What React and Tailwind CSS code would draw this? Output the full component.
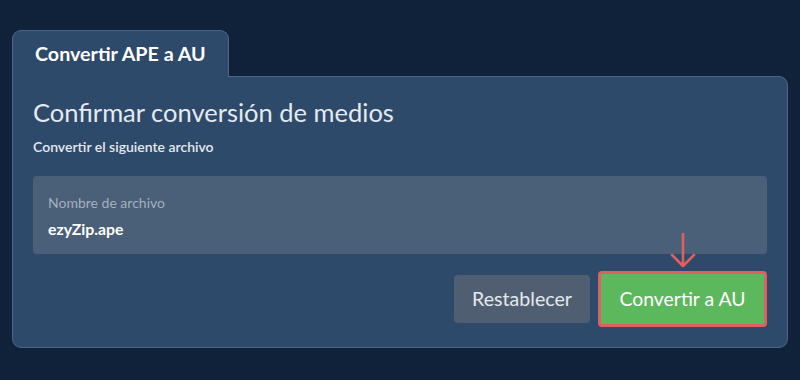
import React from "react";

function DownArrow() {
  return (
    <svg className="absolute left-1/2 -translate-x-1/2 -top-[38px]" width="30" height="36" viewBox="0 0 30 36" fill="none">
      <path d="M15 1 V33 M4 22 L15 33 L26 22" stroke="#e06060" strokeWidth="2.6" strokeLinecap="round" strokeLinejoin="round" />
    </svg>
  );
}

export default function App() {
  return (
    <div className="w-[800px] h-[380px] bg-[#10223a] pt-[30px] px-[12px]" style={{ fontFamily: "Lato, 'Noto Sans', sans-serif" }}>
      {/* Tab header */}
      <div className="flex">
        <div className="w-[217px] h-[47px] -mb-px relative z-10 bg-[#2d4a6b] border border-b-0 border-[#4b6688] rounded-t-[9px] pl-[22px] flex items-center">
          <span className="text-white font-bold text-[19.7px]">Convertir APE a AU</span>
        </div>
      </div>

      {/* Panel */}
      <div className="h-[272px] bg-[#2d4a6b] border border-[#4b6688] rounded-b-[9px] rounded-tr-[9px] px-[20px] pt-[20px]">
        <h1 className="text-[#e6e9ee] text-[25.5px] leading-[30px]">Confirmar conversión de medios</h1>
        <p className="mt-[11px] text-[#e6e9ee] text-[14px] font-semibold leading-[18px]">Convertir el siguiente archivo</p>

        <div className="mt-[20px] h-[78px] bg-[#4a5f78] rounded-[4px] px-[15px] pt-[18px]">
          <div className="text-[#a3b0bf] text-[14px] leading-[17px]">Nombre de archivo</div>
          <div className="mt-[9px] text-white text-[15.8px] font-bold leading-[18px]">ezyZip.ape</div>
        </div>

        <div className="mt-[17px] flex justify-end items-center gap-[8px]">
          <button className="h-[48px] w-[136px] bg-[#4f5e70] rounded-[4px] text-[#e6e9ee] text-[19.6px]">Restablecer</button>
          <div className="relative">
            <DownArrow />
            <button className="h-[56px] w-[169px] bg-[#5cb85c] border-[3px] border-[#e06060] rounded-[4px] text-white text-[19.4px]">Convertir a AU</button>
          </div>
        </div>
      </div>
    </div>
  );
}
